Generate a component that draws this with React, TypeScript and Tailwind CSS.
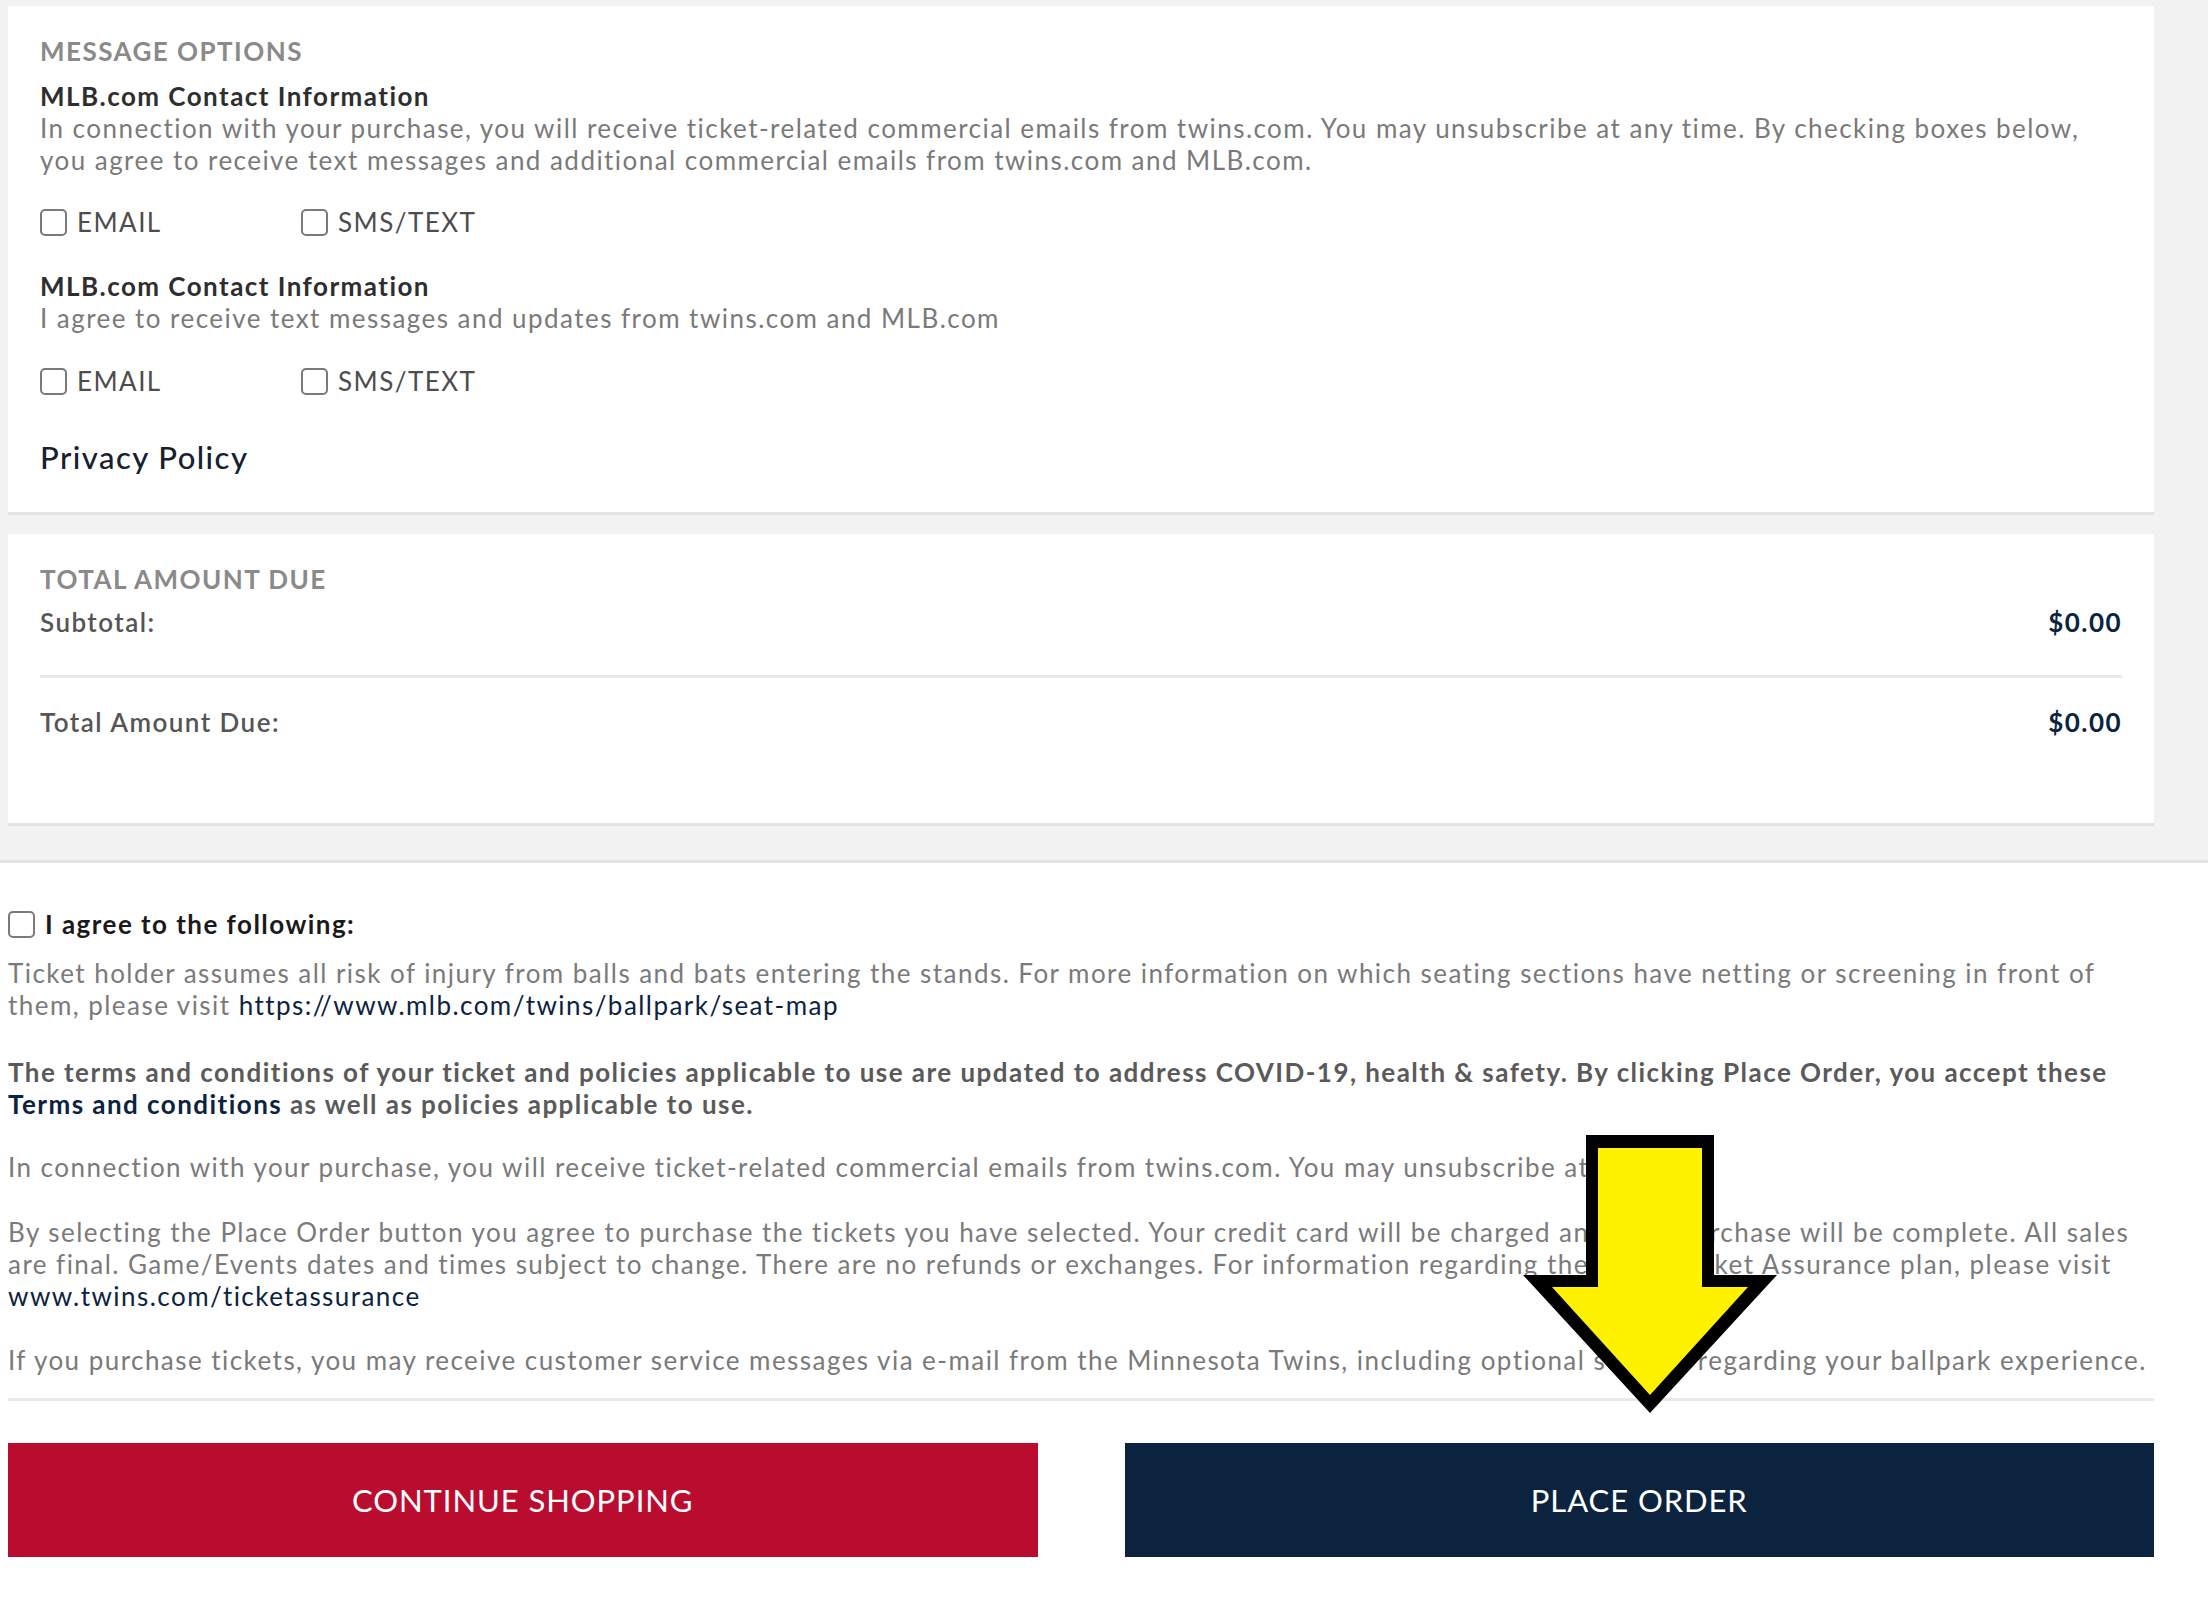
import React from 'react';

const Check = () => (
  <input
    type="checkbox"
    className="appearance-none w-[27px] h-[27px] shrink-0 border-2 border-[#7a7a7a] rounded-[5px] bg-white"
  />
);

const ChannelRow = () => (
  <div className="flex items-center h-[32px]">
    <label className="flex items-center gap-[10px] w-[261px]">
      <Check />
      <span className="text-[26px] text-[#4d4d4d]">EMAIL</span>
    </label>
    <label className="flex items-center gap-[10px]">
      <Check />
      <span className="text-[26px] text-[#4d4d4d]">SMS/TEXT</span>
    </label>
  </div>
);

export default function App() {
  return (
    <div className="relative w-[2208px] min-h-[1605px] bg-white font-['Lato',sans-serif] text-[26px] leading-[32px] tracking-[0.056em] text-[#7a7a7a]">
      {/* top: grey band with cards */}
      <section className="bg-[#f2f2f2] pt-[6px] pb-[37px] border-b-[3px] border-[#e4e4e4]">
        <div className="ml-[8px] w-[2146px] bg-white px-[32px] pt-[29px] pb-[35px] shadow-[0_3px_1px_rgba(0,0,0,0.06)]">
          <h2 className="font-bold text-[#8a8a8a] uppercase">Message Options</h2>
          <h3 className="mt-[13px] font-bold text-[#2e2e2e]">MLB.com Contact Information</h3>
          <p>
            In connection with your purchase, you will receive ticket-related commercial emails from twins.com. You may
            unsubscribe at any time. By checking boxes below, you agree to receive text messages and additional
            commercial emails from twins.com and MLB.com.
          </p>
          <div className="mt-[30px]">
            <ChannelRow />
          </div>
          <h3 className="mt-[32px] font-bold text-[#2e2e2e]">MLB.com Contact Information</h3>
          <p>I agree to receive text messages and updates from twins.com and MLB.com</p>
          <div className="mt-[31px]">
            <ChannelRow />
          </div>
          <a className="mt-[40px] block text-[31px] leading-[40px] font-medium text-[#16202e]">Privacy Policy</a>
        </div>

        <div className="mt-[22px] ml-[8px] w-[2146px] bg-white px-[32px] pt-[29px] pb-[85px] shadow-[0_3px_1px_rgba(0,0,0,0.06)]">
          <h2 className="font-bold text-[#8a8a8a] uppercase">Total Amount Due</h2>
          <div className="mt-[11px] flex justify-between font-semibold">
            <span className="text-[#555]">Subtotal:</span>
            <span className="font-bold text-[#0c2340]">$0.00</span>
          </div>
          <div className="mt-[37px] h-[3px] bg-[#e9e9e9]" />
          <div className="mt-[28px] flex justify-between font-semibold">
            <span className="text-[#555]">Total Amount Due:</span>
            <span className="font-bold text-[#0c2340]">$0.00</span>
          </div>
        </div>
      </section>

      {/* terms + actions */}
      <section className="ml-[8px] w-[2146px] pt-[45px]">
        <label className="flex items-center gap-[10px] h-[32px]">
          <Check />
          <span className="font-bold text-[#1a1a1a]">I agree to the following:</span>
        </label>

        <p className="mt-[17px]">
          Ticket holder assumes all risk of injury from balls and bats entering the stands. For more information on which
          seating sections have netting or screening in front of them, please visit{' '}
          <a className="text-[#0c2340]">https://www.mlb.com/twins/ballpark/seat-map</a>
        </p>

        <p className="mt-[35px] font-bold text-[#5a5a5a]">
          The terms and conditions of your ticket and policies applicable to use are updated to address COVID-19, health
          &amp; safety. By clicking Place Order, you accept these <a className="text-[#0c2340]">Terms and conditions</a> as
          well as policies applicable to use.
        </p>

        <p className="mt-[31px]">
          In connection with your purchase, you will receive ticket-related commercial emails from twins.com. You may
          unsubscribe at any time.
        </p>

        <p className="mt-[33px]">
          By selecting the Place Order button you agree to purchase the tickets you have selected. Your credit card will
          be charged and your purchase will be complete. All sales are final. Game/Events dates and times subject to
          change. There are no refunds or exchanges. For information regarding the Twins Ticket Assurance plan, please
          visit <a className="text-[#0c2340]">www.twins.com/ticketassurance</a>
        </p>

        <p className="mt-[32px]">
          If you purchase tickets, you may receive customer service messages via e-mail from the Minnesota Twins,
          including optional surveys regarding your ballpark experience.
        </p>

        <div className="mt-[22px] h-[3px] bg-[#e9e9e9]" />

        <div className="mt-[42px] grid grid-cols-2 gap-[87px]">
          <button className="h-[114px] bg-[#ba0c2f] text-white text-[31px] tracking-[0.03em] uppercase">
            Continue Shopping
          </button>
          <button className="h-[114px] bg-[#0c2340] text-white text-[31px] tracking-[0.03em] uppercase">
            Place Order
          </button>
        </div>
      </section>

      {/* callout arrow */}
      <svg
        className="absolute left-[1520px] top-[1132px] w-[260px] h-[284px]"
        viewBox="1520 1132 260 284"
      >
        <polygon points="1586,1135 1714,1135 1714,1275 1777,1275 1650,1413 1523,1275 1586,1275" fill="#000" />
        <polygon points="1598,1148 1702,1148 1702,1287 1748,1287 1650,1395 1552,1287 1598,1287" fill="#fff200" />
      </svg>
    </div>
  );
}
